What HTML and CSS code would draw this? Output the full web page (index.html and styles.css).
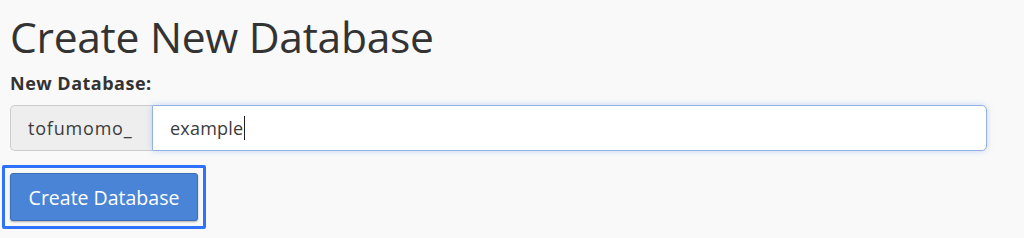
FILE: index.html
```html
<!DOCTYPE html>
<html lang="en">
<head>
  <meta charset="UTF-8" />
  <title>Create New Database</title>
  <link rel="stylesheet" href="styles.css">
</head>
<body>
  <div class="page">
    <h1>Create New Database</h1>

    <label for="db">New Database:</label>
    <div class="input-group">
      <span class="addon">tofumomo_</span>
      <div class="field"><span id="db">example</span><span class="caret"></span></div>
    </div>

    <div class="btn-wrap">
      <button class="btn">Create Database</button>
    </div>
  </div>
</body>
</html>
```

FILE: styles.css
```css
body {
  margin: 0;
  font-family: "Open Sans", sans-serif;
  background: #f9f9f9;
  color: #333;
}
.page {
  padding: 6px 37px 0 10px;
}
h1 {
  margin: 0;
  font-size: 42.6px;
  font-weight: 400;
  line-height: 60px;
  color: #333;
  letter-spacing: -0.3px;
}
label {
  display: block;
  margin-top: 6px;
  font-size: 18px;
  font-weight: 700;
  line-height: 22px;
  letter-spacing: 0.5px;
}
.input-group {
  display: flex;
  margin-top: 11px;
  height: 46px;
}
.addon {
  display: flex;
  align-items: center;
  padding: 0 17px;
  width: 142px;
  box-sizing: border-box;
  background: #eeeeee;
  border: 1px solid #cccccc;
  border-right: none;
  border-radius: 5px 0 0 5px;
  font-size: 18px;
  letter-spacing: 0.8px;
  color: #3c3c3c;
}
.field {
  flex: 1;
  display: flex;
  align-items: center;
  padding: 0 17px;
  background: #fff;
  border: 1px solid #8fb3e6;
  border-radius: 0 5px 5px 0;
  box-shadow: 0 0 6px rgba(102, 150, 230, 0.35);
  font-size: 18px;
  letter-spacing: 0.2px;
  color: #3c3c3c;
}
.caret {
  display: inline-block;
  width: 1px;
  height: 24px;
  background: #222;
  margin-left: 1px;
}
.btn-wrap {
  display: inline-block;
  margin: 14px 0 0 -8px;
  padding: 5px;
  border: 3px solid #2f72ff;
  border-radius: 2px;
}
.btn {
  display: block;
  width: 188px;
  height: 48px;
  padding: 0;
  background: #4a84d6;
  border: 1px solid #3d6fb8;
  border-radius: 3px;
  box-shadow: 0 1px 2px rgba(0, 0, 0, 0.3);
  color: #fff;
  font-family: "Open Sans", sans-serif;
  font-size: 19.5px;
}
```
